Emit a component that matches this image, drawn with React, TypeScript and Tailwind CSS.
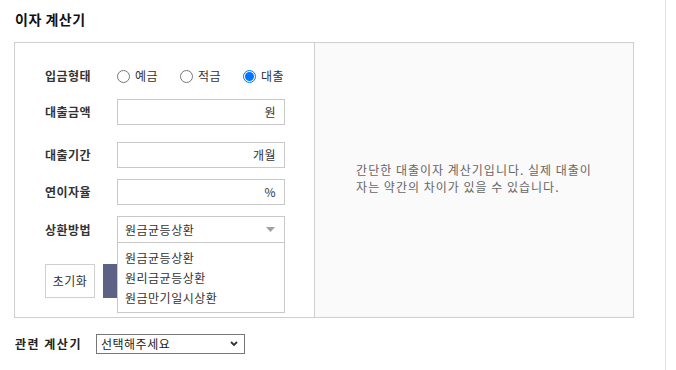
const labelCls = "w-[72px] shrink-0 text-[12px] font-bold tracking-[0.5px] text-[#333]";

function Field({ label, unit, className }: { label: string; unit: string; className: string }) {
  return (
    <div className={`flex items-center ${className}`}>
      <span className={labelCls}>{label}</span>
      <div className="flex h-[26px] w-[168px] items-center justify-end border border-[#c9c9c9] bg-white pr-[8px] text-[12px] tracking-[0.5px] text-[#333]">
        {unit}
      </div>
    </div>
  );
}

function Radio({ label, checked }: { label: string; checked?: boolean }) {
  return (
    <label className="flex w-[63px] items-center gap-[5px] text-[12px] tracking-[0.5px] text-[#333]">
      {checked ? (
        <span className="flex h-[13px] w-[13px] items-center justify-center rounded-full border border-[#0075ff] bg-white">
          <span className="h-[9px] w-[9px] rounded-full bg-[#0075ff]" />
        </span>
      ) : (
        <span className="h-[13px] w-[13px] rounded-full border border-[#767676] bg-white" />
      )}
      {label}
    </label>
  );
}

const options = ["원금균등상환", "원리금균등상환", "원금만기일시상환"];

export default function App() {
  return (
    <div
      className="h-[370px] w-[676px] overflow-hidden bg-white"
      style={{ fontFamily: '"Noto Sans CJK KR", "Noto Sans", sans-serif' }}
    >
      <div className="h-full w-[666px] border-r border-[#e3e3e3] pl-[14px] pt-[9px]">
        <h2 className="pl-[1px] text-[14px] leading-5 font-bold tracking-[0.5px] text-[#111]">이자 계산기</h2>

        <div className="mt-[13px] flex h-[276px] w-[620px] border border-[#cfcfcf]">
          <div className="w-[300px] shrink-0 border-r border-[#cfcfcf] bg-white pl-[30px] pt-[20px]">
            <div className="flex h-[26px] items-center">
              <span className={labelCls}>입금형태</span>
              <div className="flex items-center">
                <Radio label="예금" />
                <Radio label="적금" />
                <Radio label="대출" checked />
              </div>
            </div>

            <Field label="대출금액" unit="원" className="mt-[10px]" />
            <Field label="대출기간" unit="개월" className="mt-[17px]" />
            <Field label="연이자율" unit="%" className="mt-[11px]" />

            <div className="relative mt-[11px] flex items-center">
              <span className={labelCls}>상환방법</span>
              <div className="flex h-[27px] w-[168px] items-center justify-between border border-[#c9c9c9] bg-white pl-[7px] pr-[9px] text-[12px] tracking-[0.5px] text-[#333]">
                원금균등상환
                <svg width="9" height="5" viewBox="0 0 9 5">
                  <path d="M0 0h9L4.5 5z" fill="#a0a0a0" />
                </svg>
              </div>
              <div className="absolute left-[72px] top-[26px] z-10 w-[168px] border border-[#c9c9c9] bg-white pb-[4px] pt-[5px] pl-[7px]">
                {options.map((o) => (
                  <div key={o} className="h-5 text-[12px] leading-5 tracking-[0.5px] text-[#333]">
                    {o}
                  </div>
                ))}
              </div>
            </div>

            <div className="mt-[21px] flex gap-[8px]">
              <button className="h-[34px] w-[50px] border border-[#cfcfcf] bg-white text-[12px] tracking-[0.5px] text-[#333]">
                초기화
              </button>
              <button className="h-[34px] w-[80px] bg-[#5c6185]" aria-label="계산하기" />
            </div>
          </div>

          <div className="flex flex-1 items-center justify-center bg-[#fafafa] pb-[4px]">
            <p className="text-[12px] leading-[17px] tracking-[1px] text-[#666]">
              간단한 대출이자 계산기입니다. 실제 대출이
              <br />
              자는 약간의 차이가 있을 수 있습니다.
            </p>
          </div>
        </div>

        <div className="mt-[16px] flex items-center">
          <span className="w-[82px] pl-[1px] text-[12px] font-bold tracking-[1.5px] text-[#222]">관련 계산기</span>
          <div className="flex h-[20px] w-[149px] items-center justify-between border border-[#767676] bg-white pl-[4px] pr-[6px] text-[12px] tracking-[0.5px] text-[#222]">
            선택해주세요
            <svg width="8" height="6" viewBox="0 0 8 6">
              <path d="M1 1l3 3 3-3" fill="none" stroke="#333" strokeWidth="1.8" />
            </svg>
          </div>
        </div>
      </div>
    </div>
  );
}
